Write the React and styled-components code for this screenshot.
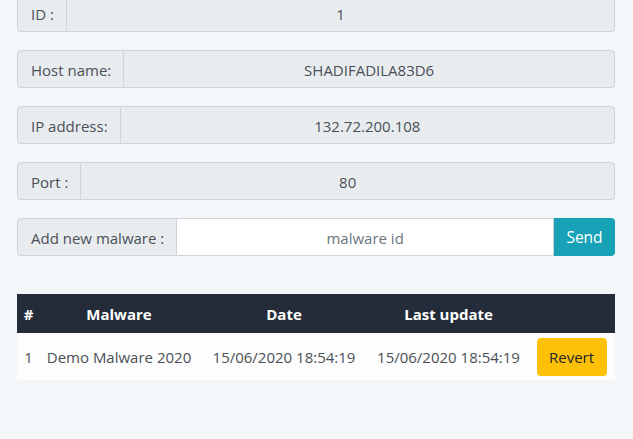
import React from 'react';
import styled, { createGlobalStyle } from 'styled-components';

const GlobalStyle = createGlobalStyle`
  html, body {
    margin: 0;
    padding: 0;
    background: #f4f7fa;
  }
  body {
    font-family: "Open Sans", "Noto Sans", sans-serif;
    font-size: 15px;
    color: #495057;
    overflow: hidden;
  }
`;

const Page = styled.div`
  padding: 0 18px 0 17px;
  margin-top: -6px;
  display: flex;
  flex-direction: column;
`;

const Form = styled.div`
  display: flex;
  flex-direction: column;
  gap: 18px;
`;

const Group = styled.div`
  display: flex;
  height: 38px;
`;

const Label = styled.div`
  display: flex;
  align-items: center;
  padding: 1px 12px 0 13px;
  background: #e9ecef;
  border: 1px solid #ced4da;
  border-radius: 4px 0 0 4px;
  white-space: nowrap;
  box-sizing: border-box;
`;

const Field = styled.div`
  flex: 1;
  display: flex;
  align-items: center;
  justify-content: center;
  padding-top: 1px;
  background: ${p => (p.$editable ? '#fff' : '#e9ecef')};
  color: ${p => (p.$placeholder ? '#6c757d' : '#495057')};
  border: 1px solid #ced4da;
  border-left: none;
  border-radius: ${p => (p.$last ? '0 4px 4px 0' : '0')};
  box-sizing: border-box;
`;

const SendButton = styled.button`
  width: 61px;
  border: none;
  background: #17a2b8;
  color: #fff;
  font: inherit;
  font-size: 15.5px;
  border-radius: 0 4px 4px 0;
  padding: 0;
`;

const Table = styled.table`
  margin-top: 38px;
  width: 598px;
  border-collapse: collapse;
  table-layout: fixed;
`;

const Th = styled.th`
  background: #242c3a;
  color: #fff;
  font-weight: 700;
  height: 39px;
  padding: 0;
  text-align: center;
`;

const Td = styled.td`
  background: #fdfdfd;
  height: 46px;
  padding: 1px 0 0;
  text-align: center;
  white-space: nowrap;
`;

const RevertButton = styled.button`
  width: 70px;
  height: 38px;
  margin-left: 1px;
  border: none;
  border-radius: 4px;
  background: #ffc107;
  color: #212529;
  font: inherit;
  padding: 0;
`;

const rows = [
  { label: 'ID :', value: '1' },
  { label: 'Host name:', value: 'SHADIFADILA83D6' },
  { label: 'IP address:', value: '132.72.200.108' },
  { label: 'Port :', value: '80' },
];

export default function App() {
  return (
    <>
      <GlobalStyle />
      <Page>
        <Form>
          {rows.map(r => (
            <Group key={r.label}>
              <Label>{r.label}</Label>
              <Field $last>{r.value}</Field>
            </Group>
          ))}
          <Group>
            <Label>Add new malware :</Label>
            <Field $editable $placeholder>malware id</Field>
            <SendButton>Send</SendButton>
          </Group>
        </Form>
        <Table>
          <colgroup>
            <col style={{ width: 23 }} />
            <col style={{ width: 158 }} />
            <col style={{ width: 172 }} />
            <col style={{ width: 157 }} />
            <col style={{ width: 88 }} />
          </colgroup>
          <thead>
            <tr>
              <Th>#</Th>
              <Th>Malware</Th>
              <Th>Date</Th>
              <Th>Last update</Th>
              <Th />
            </tr>
          </thead>
          <tbody>
            <tr>
              <Td>1</Td>
              <Td>Demo Malware 2020</Td>
              <Td>15/06/2020 18:54:19</Td>
              <Td>15/06/2020 18:54:19</Td>
              <Td><RevertButton>Revert</RevertButton></Td>
            </tr>
          </tbody>
        </Table>
      </Page>
    </>
  );
}
